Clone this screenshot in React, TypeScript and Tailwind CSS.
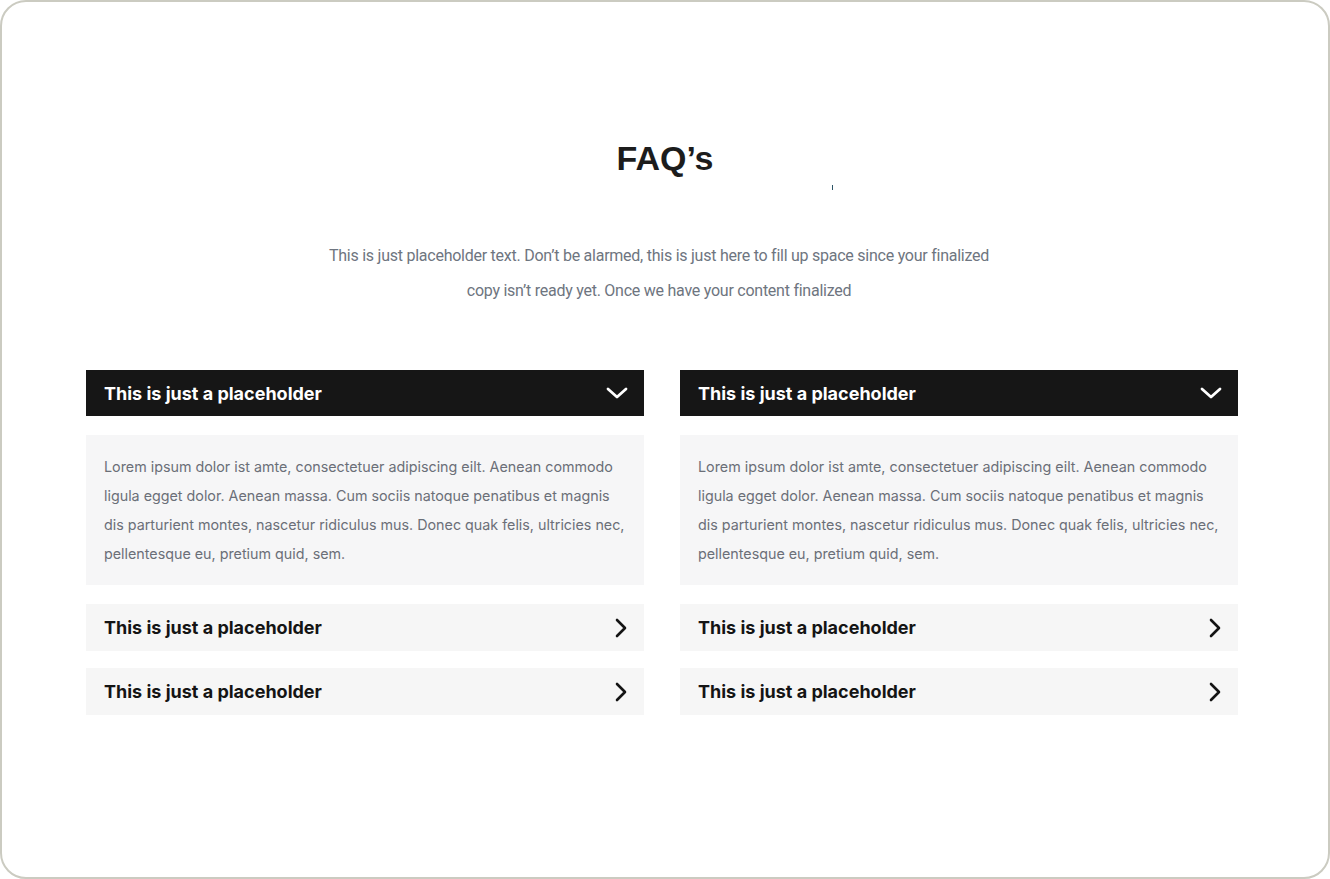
const body =
  'Lorem ipsum dolor ist amte, consectetuer adipiscing eilt. Aenean commodo ligula egget dolor. Aenean massa. Cum sociis natoque penatibus et magnis dis parturient montes, nascetur ridiculus mus. Donec quak felis, ultricies nec, pellentesque eu, pretium quid, sem.';

function ChevronDown() {
  return (
    <svg width="22" height="14" viewBox="0 0 22 14" fill="none">
      <polyline points="2,3 11,11 20,3" stroke="white" strokeWidth="2.8" strokeLinecap="round" strokeLinejoin="round" />
    </svg>
  );
}

function ChevronRight() {
  return (
    <svg width="14" height="20" viewBox="0 0 14 20" fill="none">
      <polyline points="3,2 11,10 3,18" stroke="#141414" strokeWidth="2.6" strokeLinecap="round" strokeLinejoin="round" />
    </svg>
  );
}

function FaqColumn() {
  return (
    <div className="flex flex-col">
      <div className="h-[46px] bg-[#161616] flex items-center justify-between pl-[18px] pr-[16px]">
        <span className="text-[18px] font-bold text-white">This is just a placeholder</span>
        <ChevronDown />
      </div>
      <div className="mt-[19px] bg-[#f6f6f7] h-[150px] pl-[18px] pr-[14px] pt-[17px]">
        <p className="text-[14.3px] leading-[29px] text-[#6b6f78]">{body}</p>
      </div>
      {[0, 1].map((i) => (
        <div
          key={i}
          className={`h-[47px] bg-[#f6f6f6] flex items-center justify-between pl-[18px] pr-[16px] ${i === 0 ? 'mt-[19px]' : 'mt-[17px]'}`}
        >
          <span className="text-[18px] font-bold text-[#141414]">This is just a placeholder</span>
          <ChevronRight />
        </div>
      ))}
    </div>
  );
}

export default function App() {
  return (
    <div className="w-[1330px] h-[879px] bg-white">
      <div
        className="w-[1330px] h-[879px] border-2 border-[#cbcbc1] rounded-[26px] bg-white flex flex-col items-center"
        style={{ fontFamily: 'Inter, "Noto Sans", sans-serif' }}
      >
        <h1
          className="mt-[134px] text-[34px] font-bold text-[#1c1c1c] leading-[44px]"
          style={{ fontFamily: '"Liberation Sans", Arial, sans-serif' }}
        >
          FAQ’s
        </h1>
        <div className="relative w-full h-[58px]">
          <div className="absolute left-[830px] top-[5px] w-[1px] h-[5px] bg-[#2d5566]" />
        </div>
        <p
          className="w-[700px] ml-[-12px] text-center text-[16px] leading-[35px] text-[#6e7580] tracking-[-0.25px]"
          style={{ fontFamily: 'Roboto, sans-serif' }}
        >
          This is just placeholder text. Don’t be alarmed, this is just here to fill up space since your finalized
          <br />
          copy isn’t ready yet. Once we have your content finalized
        </p>
        <div className="mt-[62px] w-[1152px] grid grid-cols-2 gap-[36px] ml-[-6px]">
          <FaqColumn />
          <FaqColumn />
        </div>
      </div>
    </div>
  );
}
